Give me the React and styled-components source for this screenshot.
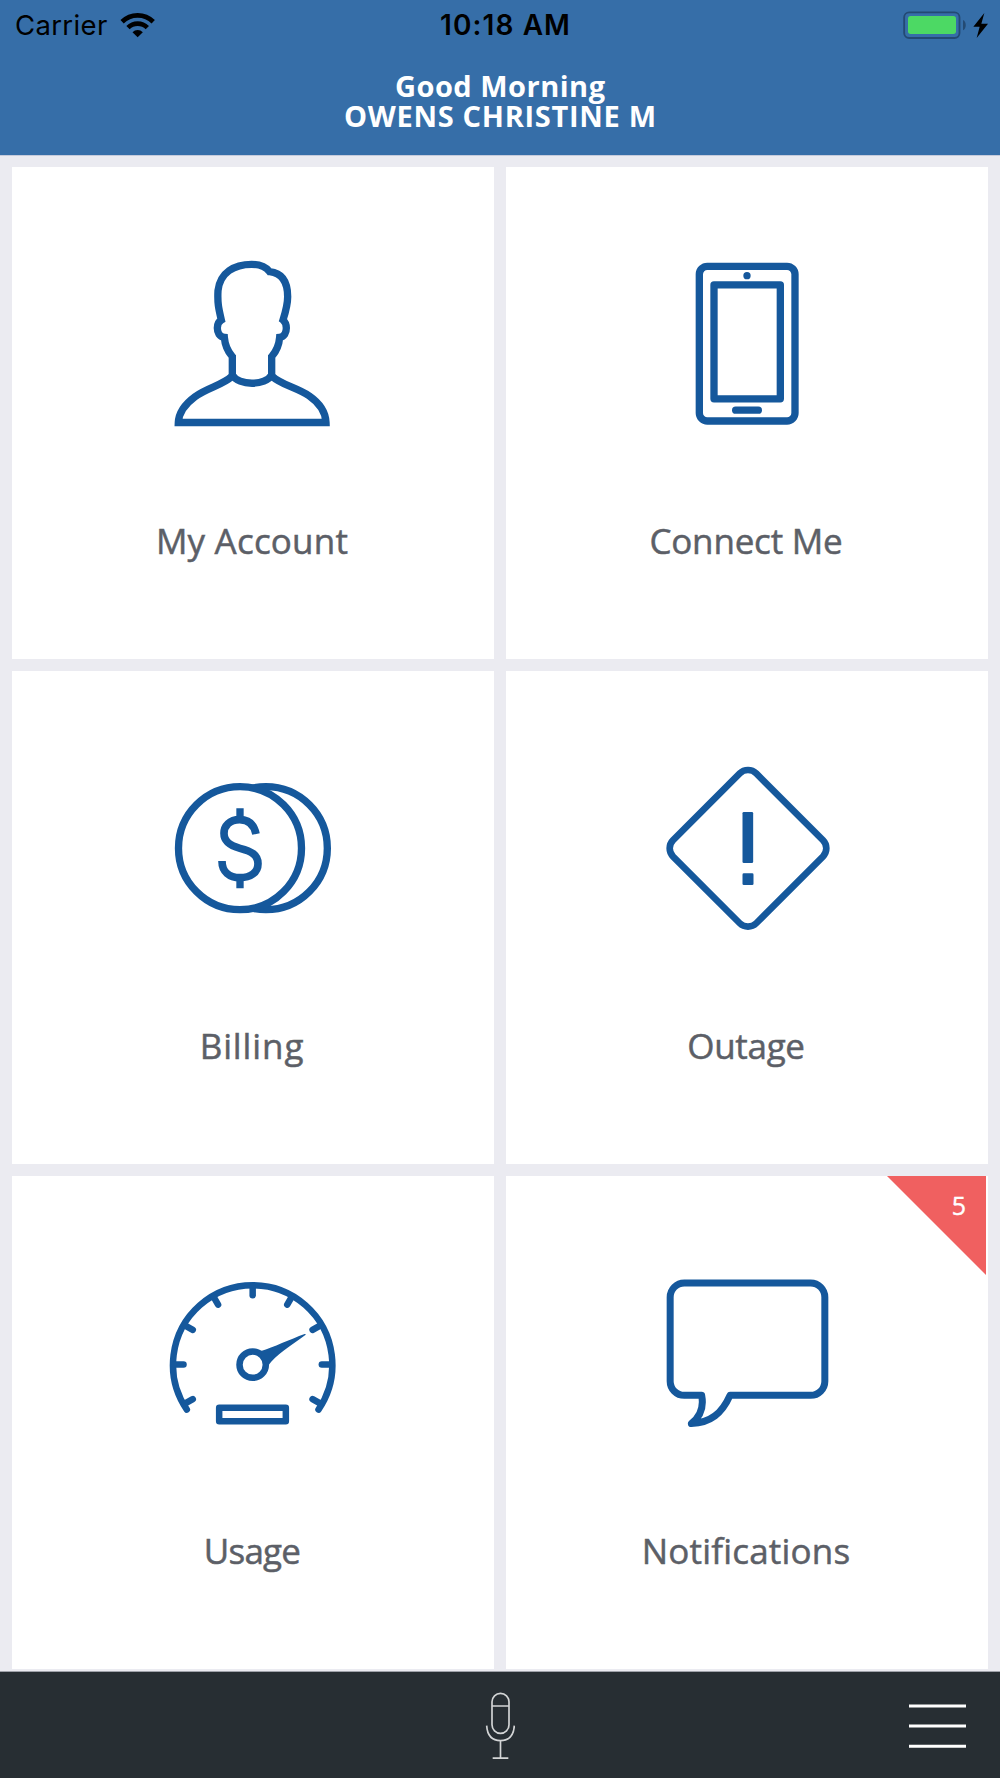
import React from 'react';
import styled, { createGlobalStyle, ThemeProvider } from 'styled-components';

const theme = {
  header: '#366ea8',
  icon: '#15589c',
  label: '#5c5f67',
  gap: '#ebebf1',
  footer: '#272e33',
  badge: '#f06060',
  fontText: '"Open Sans", "Noto Sans", sans-serif',
  fontStatus: 'Inter, "Liberation Sans", sans-serif',
};

const GlobalStyle = createGlobalStyle`
  * {
    box-sizing: border-box;
  }

  body {
    margin: 0;
  }
`;

const Screen = styled.div`
  background: ${p => p.theme.gap};
  display: flex;
  flex-direction: column;
  height: 1778px;
  overflow: hidden;
  width: 1000px;
`;

const Header = styled.header`
  background: ${p => p.theme.header};
  border-bottom: 1px solid #c5cbdc;
  flex: none;
  height: 156px;
`;

const StatusBar = styled.div`
  align-items: center;
  color: #000;
  display: grid;
  font-family: ${p => p.theme.fontStatus};
  font-size: 27.5px;
  grid-template-columns: 1fr auto 1fr;
  height: 50px;
  line-height: 50px;
  padding: 0 10px 0 15px;
`;

const Carrier = styled.div`
  align-items: center;
  display: flex;
  gap: 12px;
  letter-spacing: 0.35px;
`;

const Clock = styled.div`
  font-size: 28px;
  font-weight: 600;
  letter-spacing: 1.1px;
  padding-left: 6px;
`;

const Power = styled.div`
  display: flex;
  justify-content: flex-end;
`;

const Greeting = styled.div`
  color: #fff;
  display: flex;
  flex-direction: column;
  align-items: center;
  font-family: ${p => p.theme.fontText};
  font-size: 29px;
  font-weight: 700;
  line-height: 30px;
  padding-top: 21px;
`;

const GreetingLine = styled.span`
  letter-spacing: ${p => p.$spacing}px;
  margin-right: -${p => p.$spacing}px;
  white-space: nowrap;
`;

const Tiles = styled.main`
  display: grid;
  flex: 1;
  gap: 12px;
  grid-template-columns: 482px 482px;
  grid-template-rows: 492px 493px 493px;
  padding: 11px 12px 0;
`;

const Tile = styled.section`
  align-items: center;
  background: #fff;
  display: flex;
  flex-direction: column;
  padding-top: 87px;
  position: relative;
`;

const TileIcon = styled.svg`
  fill: none;
  flex: none;
  height: 180px;
  stroke: ${p => p.theme.icon};
  stroke-width: 22;
  width: 180px;
`;

const TileLabel = styled.div`
  -webkit-text-stroke: 0.5px ${p => p.theme.label};
  color: ${p => p.theme.label};
  font-family: ${p => p.theme.fontText};
  font-size: 35px;
  letter-spacing: ${p => p.$spacing}px;
  line-height: 48px;
  margin-top: ${p => p.$offset}px;
  padding-right: 2px;
  white-space: nowrap;
`;

const Badge = styled.div`
  -webkit-text-stroke: 0.4px #fff;
  background: ${p => p.theme.badge};
  clip-path: polygon(0 0, 100% 0, 100% 100%);
  color: #fff;
  font-family: ${p => p.theme.fontText};
  font-size: 25px;
  height: 99px;
  line-height: 30px;
  padding: 14px 20px 0 0;
  position: absolute;
  right: 2px;
  text-align: right;
  top: 0;
  width: 99px;
`;

const Footer = styled.footer`
  align-items: center;
  background: ${p => p.theme.footer};
  border-top: 1px solid #9fa2aa;
  display: grid;
  flex: none;
  grid-template-columns: 1fr auto 1fr;
  height: 107px;
  padding: 0 34px;
`;

const FooterButton = styled.button`
  background: none;
  border: 0;
  display: flex;
  grid-column: ${p => p.$column};
  justify-self: ${p => p.$align};
  padding: 0;
`;

const WifiIcon = () => (
  <svg width="36" height="26" viewBox="360 33 108 78" fill="none">
    <g stroke="#000" strokeWidth="14">
      <path d="M366.3 62.3A66 66 0 0 1 459.7 62.3" />
      <path d="M384 80A41 41 0 0 1 442 80" />
    </g>
    <path d="M413 109L397.5 93.5A22 22 0 0 1 428.5 93.5Z" fill="#000" />
  </svg>
);

const BatteryIcon = () => (
  <svg width="88" height="30" viewBox="1206 27 264 90">
    <rect
      x="1212.5"
      y="34"
      width="166"
      height="77"
      rx="15"
      fill="none"
      stroke="#234a73"
      strokeWidth="5.5"
    />
    <rect x="1224" y="45" width="144" height="54" rx="8" fill="#4cd964" />
    <path d="M1389 57C1400 62 1400 83 1389 88Z" fill="#234a73" />
    <path d="M1453 36L1420 77H1439L1430 111L1464 68H1444Z" fill="#000" />
  </svg>
);

const PersonIcon = () => (
  <TileIcon viewBox="69 42 540 540">
    <path d="M277 408V350C263 334 255 316 253 292C238 290 232 278 232 264C232 252 237 244 244 240C236 206 232 190 234 152C240 97 283 73 335 73C360 73 377 80 389 95C425 99 443 125 443 170C443 195 436 218 429 240C435 245 439 253 439 264C439 278 433 290 419 292C417 316 409 334 395 350V408" />
    <path d="M277 405C295 438 377 438 395 405" />
    <path d="M277 408C247 436 206 441 165 470C131 495 116 522 115 547.5H558C557 520 541 491 508 468C467 441 426 436 395 408" />
  </TileIcon>
);

const PhoneIcon = () => (
  <TileIcon viewBox="81 42 540 540">
    <rect x="208" y="79" width="287" height="464" rx="24" />
    <rect x="252" y="134.5" width="199" height="342" strokeLinejoin="round" />
    <circle cx="351" cy="107" r="5.5" strokeWidth="11" />
    <path d="M317 510.5H385" strokeLinecap="round" />
  </TileIcon>
);

const CoinsIcon = () => (
  <TileIcon viewBox="39 -6 540 540">
    <circle cx="347.5" cy="264.5" r="184.5" />
    <circle cx="270" cy="264.5" r="184.5" fill="#fff" />
    <path
      d="M318 222C312 192 295 179 269 179C238 179 222 198 222 220C222 245 240 257 270 265C305 274 324 285 324 311C324 338 301 353 270 353C238 353 216 335 216 303"
      strokeWidth="23"
    />
    <path d="M270 145V180M270 352V385" />
  </TileIcon>
);

const OutageIcon = () => (
  <TileIcon viewBox="51 24 540 540">
    <rect
      x="-176.4"
      y="-176.4"
      width="352.8"
      height="352.8"
      rx="35"
      strokeWidth="20"
      transform="translate(324 295) rotate(45)"
    />
    <g fill="#15589c" stroke="none">
      <rect x="307.5" y="186" width="32" height="153" rx="4" />
      <rect x="307.5" y="370" width="33" height="35" rx="4" />
    </g>
  </TileIcon>
);

const tickAngles = [-120, -90, -60, -30, 0, 30, 60, 90, 120];

const GaugeIcon = () => (
  <TileIcon viewBox="39 9 540 540">
    <g strokeWidth="19.5" strokeLinecap="round" strokeLinejoin="round">
      <path d="M110.5 449A239 239 0 1 1 505.5 449" />
      {tickAngles.map(angle => (
        <path
          key={angle}
          d="M308 80V106"
          transform={`rotate(${angle} 308 313.5)`}
        />
      ))}
      <rect x="207.5" y="443" width="200" height="40.5" />
      <circle cx="308" cy="314" r="39.5" />
    </g>
    <path
      d="M333 273C370 262 420 238 464 222C468 221 468 224 465 226C425 255 375 288 356 315L336 302Z"
      fill="#15589c"
      stroke="none"
    />
  </TileIcon>
);

const BubbleIcon = () => (
  <TileIcon viewBox="81 9 540 540">
    <path
      d="M163 69H542A42.5 42.5 0 0 1 584.5 111.5V363.5A42.5 42.5 0 0 1 542 406H300C276 460 242 488 184 490.5C213 469 222 443 215 406H163A42.5 42.5 0 0 1 120.5 363.5V111.5A42.5 42.5 0 0 1 163 69Z"
      strokeWidth="21"
      strokeLinejoin="round"
    />
  </TileIcon>
);

const MicIcon = () => (
  <svg
    width="30"
    height="68"
    viewBox="135 123 90 204"
    fill="none"
    stroke="#d3d5d6"
    strokeWidth="5"
  >
    <rect x="156" y="130" width="51" height="120" rx="25.5" />
    <path d="M156 168H207M140 227C142 258 158 272 181.5 272C205 272 221 258 223 227M181.5 272V324M158 324.5H205" />
  </svg>
);

const MenuIcon = () => (
  <svg width="57" height="46" viewBox="0 0 57 46" stroke="#fff" strokeWidth="3">
    <path d="M0 4H57M0 24H57M0 44.3H57" />
  </svg>
);

const tiles = [
  { label: 'My Account', spacing: 0.2, offset: 83, Icon: PersonIcon },
  { label: 'Connect Me', spacing: -0.2, offset: 83, Icon: PhoneIcon },
  { label: 'Billing', spacing: 0.9, offset: 84, Icon: CoinsIcon },
  { label: 'Outage', spacing: -0.3, offset: 84, Icon: OutageIcon },
  { label: 'Usage', spacing: -0.8, offset: 84, Icon: GaugeIcon },
  {
    label: 'Notifications',
    spacing: 0.2,
    offset: 84,
    Icon: BubbleIcon,
    count: 5,
  },
];

const App = () => (
  <ThemeProvider theme={theme}>
    <GlobalStyle />
    <Screen>
      <Header>
        <StatusBar>
          <Carrier>
            Carrier
            <WifiIcon />
          </Carrier>
          <Clock>10:18 AM</Clock>
          <Power>
            <BatteryIcon />
          </Power>
        </StatusBar>
        <Greeting>
          <GreetingLine $spacing={0.5}>Good Morning</GreetingLine>
          <GreetingLine $spacing={0.7}>OWENS CHRISTINE M</GreetingLine>
        </Greeting>
      </Header>
      <Tiles>
        {tiles.map(({ label, spacing, offset, Icon, count }) => (
          <Tile key={label}>
            <Icon />
            <TileLabel $spacing={spacing} $offset={offset}>
              {label}
            </TileLabel>
            {count && <Badge>{count}</Badge>}
          </Tile>
        ))}
      </Tiles>
      <Footer>
        <FooterButton $column={2} $align="center" aria-label="Voice">
          <MicIcon />
        </FooterButton>
        <FooterButton $column={3} $align="end" aria-label="Menu">
          <MenuIcon />
        </FooterButton>
      </Footer>
    </Screen>
  </ThemeProvider>
);

export default App;
